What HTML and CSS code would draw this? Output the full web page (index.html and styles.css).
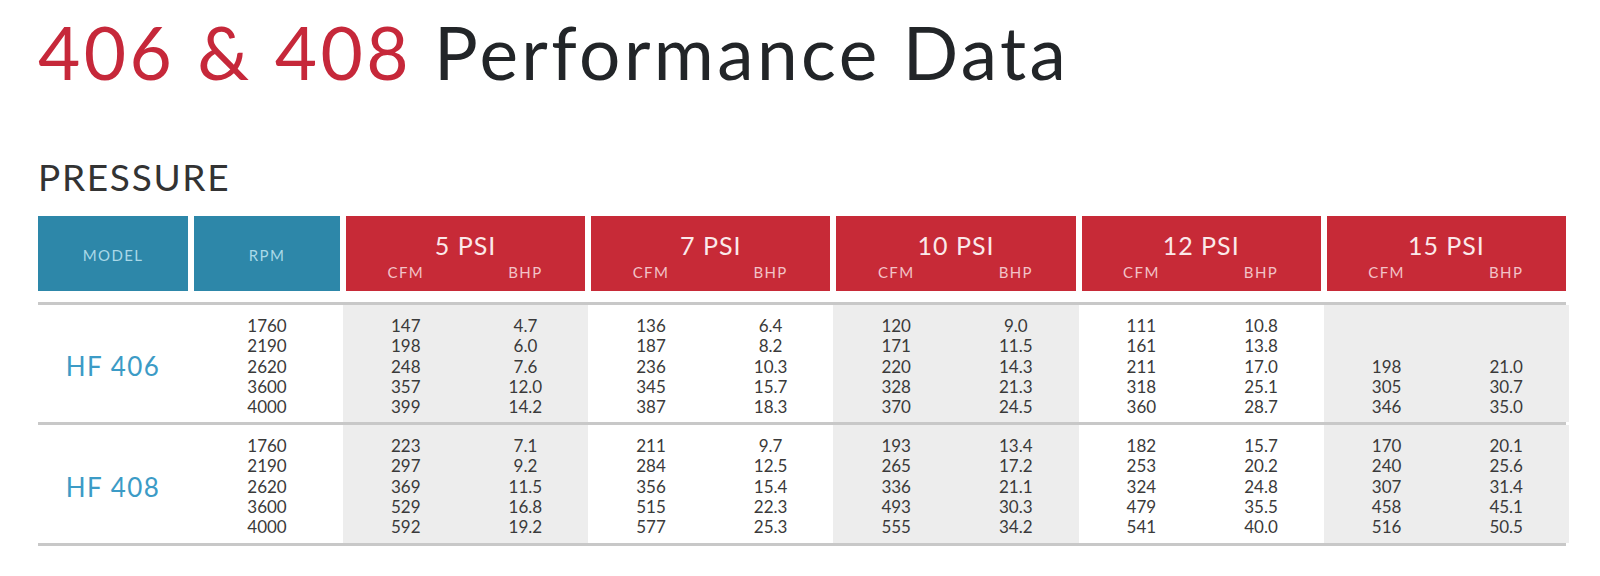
FILE: index.html
```html
<!DOCTYPE html>
<html lang="en">
<head>
<meta charset="utf-8">
<title>406 &amp; 408 Performance Data</title>
<link rel="stylesheet" href="styles.css">
</head>
<body>
<main class="page">
  <h1 class="title"><span class="title-red">406 &amp; 408</span> Performance Data</h1>
  <h2 class="section">PRESSURE</h2>
  <div class="table">
    <div class="row head">
      <div class="hcell blue">MODEL</div>
      <div class="hcell blue">RPM</div>
      <div class="hcell red"><div class="psi">5 PSI</div><div class="sub"><span>CFM</span><span>BHP</span></div></div>
      <div class="hcell red"><div class="psi">7 PSI</div><div class="sub"><span>CFM</span><span>BHP</span></div></div>
      <div class="hcell red"><div class="psi">10 PSI</div><div class="sub"><span>CFM</span><span>BHP</span></div></div>
      <div class="hcell red"><div class="psi">12 PSI</div><div class="sub"><span>CFM</span><span>BHP</span></div></div>
      <div class="hcell red"><div class="psi">15 PSI</div><div class="sub"><span>CFM</span><span>BHP</span></div></div>
    </div>

    <div class="row group">
      <div class="model">HF 406</div>
      <div class="vals"><div>1760</div><div>2190</div><div>2620</div><div>3600</div><div>4000</div></div>
      <div class="pcell shade"><div class="vals"><div>147</div><div>198</div><div>248</div><div>357</div><div>399</div></div><div class="vals"><div>4.7</div><div>6.0</div><div>7.6</div><div>12.0</div><div>14.2</div></div></div>
      <div class="pcell"><div class="vals"><div>136</div><div>187</div><div>236</div><div>345</div><div>387</div></div><div class="vals"><div>6.4</div><div>8.2</div><div>10.3</div><div>15.7</div><div>18.3</div></div></div>
      <div class="pcell shade"><div class="vals"><div>120</div><div>171</div><div>220</div><div>328</div><div>370</div></div><div class="vals"><div>9.0</div><div>11.5</div><div>14.3</div><div>21.3</div><div>24.5</div></div></div>
      <div class="pcell"><div class="vals"><div>111</div><div>161</div><div>211</div><div>318</div><div>360</div></div><div class="vals"><div>10.8</div><div>13.8</div><div>17.0</div><div>25.1</div><div>28.7</div></div></div>
      <div class="pcell shade"><div class="vals"><div>&nbsp;</div><div>&nbsp;</div><div>198</div><div>305</div><div>346</div></div><div class="vals"><div>&nbsp;</div><div>&nbsp;</div><div>21.0</div><div>30.7</div><div>35.0</div></div></div>
    </div>

    <div class="row group last">
      <div class="model">HF 408</div>
      <div class="vals"><div>1760</div><div>2190</div><div>2620</div><div>3600</div><div>4000</div></div>
      <div class="pcell shade"><div class="vals"><div>223</div><div>297</div><div>369</div><div>529</div><div>592</div></div><div class="vals"><div>7.1</div><div>9.2</div><div>11.5</div><div>16.8</div><div>19.2</div></div></div>
      <div class="pcell"><div class="vals"><div>211</div><div>284</div><div>356</div><div>515</div><div>577</div></div><div class="vals"><div>9.7</div><div>12.5</div><div>15.4</div><div>22.3</div><div>25.3</div></div></div>
      <div class="pcell shade"><div class="vals"><div>193</div><div>265</div><div>336</div><div>493</div><div>555</div></div><div class="vals"><div>13.4</div><div>17.2</div><div>21.1</div><div>30.3</div><div>34.2</div></div></div>
      <div class="pcell"><div class="vals"><div>182</div><div>253</div><div>324</div><div>479</div><div>541</div></div><div class="vals"><div>15.7</div><div>20.2</div><div>24.8</div><div>35.5</div><div>40.0</div></div></div>
      <div class="pcell shade"><div class="vals"><div>170</div><div>240</div><div>307</div><div>458</div><div>516</div></div><div class="vals"><div>20.1</div><div>25.6</div><div>31.4</div><div>45.1</div><div>50.5</div></div></div>
    </div>
  </div>
</main>
</body>
</html>
```

FILE: styles.css
```css
html, body {
  margin: 0;
  padding: 0;
  background: #ffffff;
}

.page {
  padding: 12px 0 0 38px;
  font-family: "Lato", "Noto Sans", sans-serif;
  color: #2b2b2b;
}

.title {
  margin: 0;
  font-family: "Lato", sans-serif;
  font-weight: 400;
  font-size: 73px;
  line-height: 80px;
  color: #222528;
  letter-spacing: 3.4px;
}

.title-red {
  color: #c6283a;
}

.section {
  margin: 65px 0 0 0;
  font-weight: 400;
  font-size: 37px;
  line-height: 40px;
  color: #333333;
  letter-spacing: 1.7px;
}

.table {
  width: 1528px;
  margin-top: 19px;
}

.row {
  display: grid;
  grid-template-columns: 150px 146px repeat(5, 1fr);
  column-gap: 6px;
}

.head {
  height: 75px;
  margin-bottom: 11px;
}

.hcell {
  display: flex;
  flex-direction: column;
  align-items: center;
  justify-content: flex-start;
  color: #ffffff;
}

.blue {
  background: #2d87a9;
  color: #a9d9e8;
  font-size: 15px;
  line-height: 18px;
  letter-spacing: 1.4px;
  justify-content: center;
  padding-top: 3px;
}

.red {
  background: #c72a37;
}

.psi {
  font-size: 25px;
  line-height: 30px;
  color: #fbe9ea;
  margin-top: 14px;
  letter-spacing: 1px;
}

.sub {
  display: flex;
  width: 100%;
  margin-top: 3px;
  font-size: 15px;
  line-height: 18px;
  color: #f2c3c8;
  letter-spacing: 1.4px;
}

.sub span {
  flex: 1;
  text-align: center;
}

.group {
  border-top: 3px solid #c8c8c8;
  height: 117px;
}

.group.last {
  height: 118px;
  border-bottom: 3px solid #c8c8c8;
}

.model {
  display: flex;
  align-items: center;
  justify-content: center;
  font-size: 26px;
  letter-spacing: 1.4px;
  color: #3c9bc6;
  padding-top: 5px;
}

.vals {
  display: flex;
  flex-direction: column;
  align-items: center;
  padding-top: 11px;
  font-size: 17px;
  line-height: 20.3px;
  color: #3a3a3a;
}

.pcell {
  display: grid;
  grid-template-columns: 1fr 1fr;
}

.shade {
  background: #ededed;
  box-shadow: -3px 0 0 #ededed, 3px 0 0 #ededed;
}
```
